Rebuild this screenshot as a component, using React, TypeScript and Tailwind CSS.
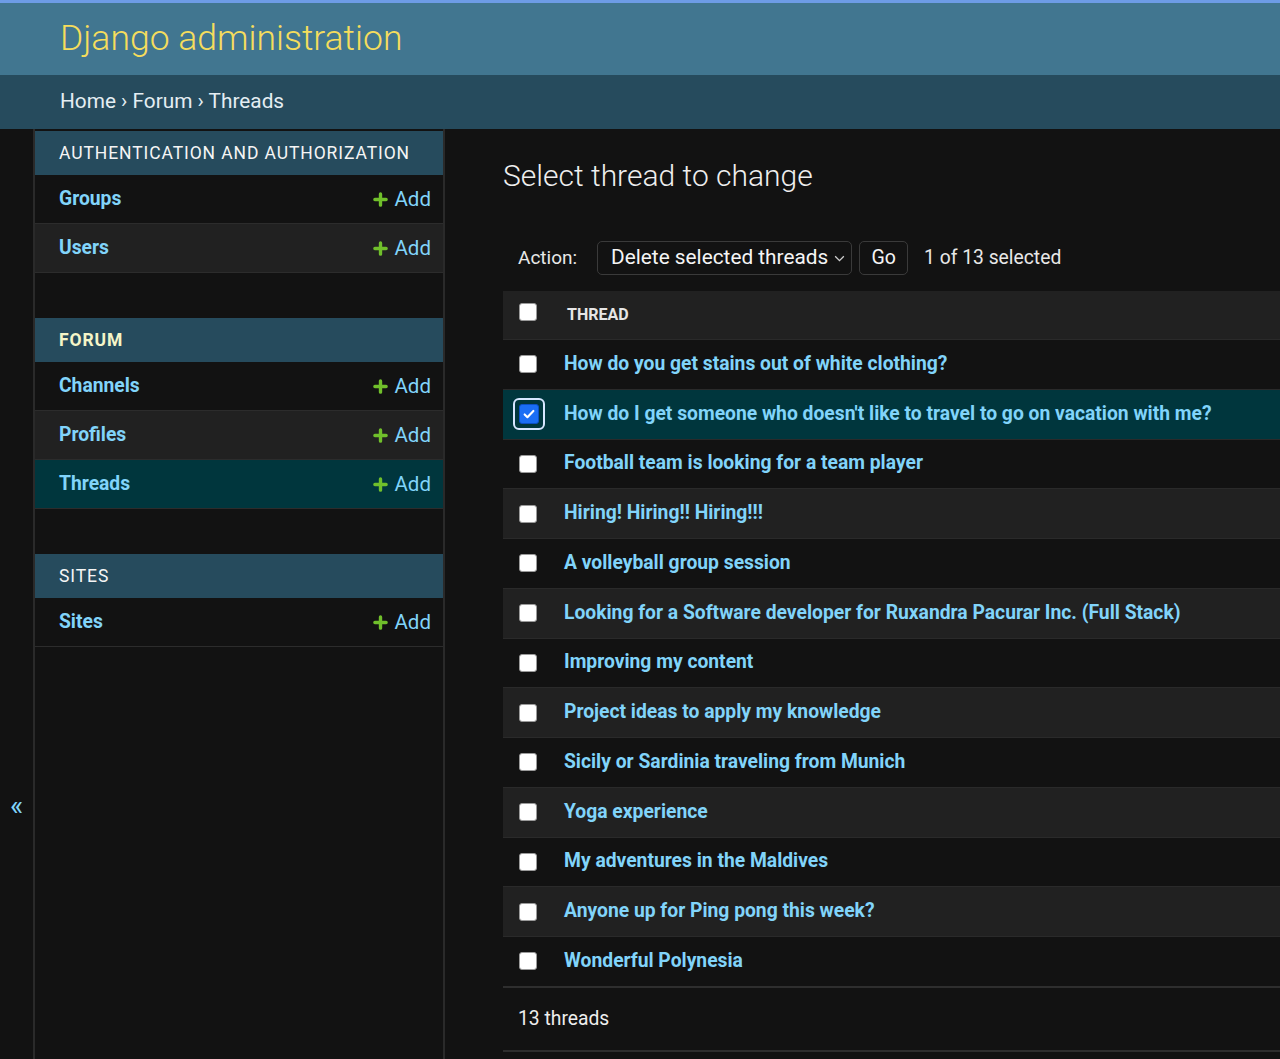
import React from "react";

type Model = { name: string; selected?: boolean };
type AppModule = { title: string; current?: boolean; models: Model[] };

const modules: AppModule[] = [
  { title: "Authentication and Authorization", models: [{ name: "Groups" }, { name: "Users" }] },
  {
    title: "Forum",
    current: true,
    models: [{ name: "Channels" }, { name: "Profiles" }, { name: "Threads", selected: true }],
  },
  { title: "Sites", models: [{ name: "Sites" }] },
];

const threads = [
  "How do you get stains out of white clothing?",
  "How do I get someone who doesn't like to travel to go on vacation with me?",
  "Football team is looking for a team player",
  "Hiring! Hiring!! Hiring!!!",
  "A volleyball group session",
  "Looking for a Software developer for Ruxandra Pacurar Inc. (Full Stack)",
  "Improving my content",
  "Project ideas to apply my knowledge",
  "Sicily or Sardinia traveling from Munich",
  "Yoga experience",
  "My adventures in the Maldives",
  "Anyone up for Ping pong this week?",
  "Wonderful Polynesia",
];

function PlusIcon() {
  return (
    <svg width="15" height="15" viewBox="0 0 16 16" className="mr-[7px]">
      <path d="M8 2v12M2 8h12" stroke="#70bf2b" strokeWidth="3.6" strokeLinecap="round" fill="none" />
    </svg>
  );
}

function Checkbox({ checked }: { checked?: boolean }) {
  if (checked) {
    return (
      <span className="relative inline-flex h-[20px] w-[20px]">
        <span className="absolute -left-[6px] -top-[6px] h-[32px] w-[32px] rounded-[6px] border-2 border-[#d6e6ff]" />
        <span className="flex h-[20px] w-[20px] items-center justify-center rounded-[3px] border border-[#0b4fc4] bg-[#1a6ef5]">
          <svg width="14" height="14" viewBox="0 0 16 16">
            <path d="M3 8.5l3.2 3.2L13 4.5" stroke="white" strokeWidth="2.4" fill="none" strokeLinecap="round" strokeLinejoin="round" />
          </svg>
        </span>
      </span>
    );
  }
  return <span className="inline-block h-[18px] w-[18px] rounded-[3px] border border-[#9a9a9a] bg-white" />;
}

function Sidebar() {
  return (
    <nav className="w-[410px] shrink-0 border-r-2 border-[#2a2a2a] pt-[2px]">
      {modules.map((m) => (
        <div key={m.title} className="mb-[45px]">
          <div
            className={
              "flex h-[44px] items-center bg-[#264b5d] px-[24px] text-[17.5px] uppercase tracking-[0.9px] " +
              (m.current ? "font-bold text-[#f5f5c8]" : "text-[#f5f5f5]")
            }
          >
            {m.title}
          </div>
          {m.models.map((model, i) => (
            <div
              key={model.name}
              className={
                "flex h-[49px] items-center justify-between border-b border-[#2c2c2c] pl-[24px] pr-[12px] " +
                (model.selected ? "bg-[#00363d]" : i % 2 === 1 ? "bg-[#212121]" : "bg-[#121212]")
              }
            >
              <span className="text-[19.3px] font-bold text-[#81d4fa]">{model.name}</span>
              <span className="flex items-center text-[20.5px] text-[#81d4fa]">
                <PlusIcon />
                Add
              </span>
            </div>
          ))}
        </div>
      ))}
    </nav>
  );
}

export default function App() {
  return (
    <div
      className="flex min-h-[1059px] flex-col overflow-hidden border-t-[3px] border-[#6d9ce6] bg-[#121212] text-[#f5f5f5]"
      style={{ fontFamily: "Roboto, 'Noto Sans', sans-serif" }}
    >
      <header className="flex h-[72px] items-center bg-[#417690] px-[60px]">
        <h1 className="text-[35.5px] font-light text-[#f5dd5d]">Django administration</h1>
      </header>
      <div className="flex h-[54px] items-center bg-[#264b5d] px-[60px] text-[20.8px] text-[#e4eef3]">
        Home › Forum › Threads
      </div>
      <div className="flex flex-1">
        <div className="flex w-[35px] shrink-0 justify-center border-r-2 border-[#2a2a2a] pt-[663px]">
          <span className="text-[28px] leading-none text-[#81d4fa]">«</span>
        </div>
        <Sidebar />
        <main className="min-w-0 flex-1 pl-[58px] pt-[29px]">
          <h2 className="h-[36px] text-[30px] font-light leading-[36px] text-[#eeeeee]">Select thread to change</h2>
          <div className="mt-[32px] flex h-[64px] items-center gap-[7px] pl-[15px] text-[19px]">
            <span className="mr-[13px] text-[#e8e8e8]">Action:</span>
            <span className="flex h-[34px] w-[255px] items-center justify-between rounded-[5px] border border-[#3a3a3a] pl-[13px] pr-[5px] text-[20.8px] text-[#f5f5f5]">
              Delete selected threads
              <svg width="13" height="13" viewBox="0 0 12 12">
                <path d="M2 4l4 4 4-4" stroke="#d0d0d0" strokeWidth="1.2" fill="none" />
              </svg>
            </span>
            <span className="flex h-[34px] w-[49px] items-center justify-center rounded-[5px] border border-[#3a3a3a] text-[19.5px]">
              Go
            </span>
            <span className="ml-[9px] text-[19.3px] text-[#e8e8e8]">1 of 13 selected</span>
          </div>
          <div className="mt-[1px] w-[800px] min-w-full">
            <div className="flex h-[48px] items-center bg-[#212121] pl-[16px]">
              <span className="w-[48px]">
                <Checkbox />
              </span>
              <span className="text-[16px] font-bold uppercase text-[#e6e6e6]">Thread</span>
            </div>
            {threads.map((t, i) => (
              <div
                key={t}
                className={
                  "flex h-[49.75px] items-center border-t border-[#2a2a2a] pl-[16px] " +
                  (i === 1 ? "bg-[#00363d]" : i % 2 === 1 ? "bg-[#212121]" : "bg-[#121212]")
                }
              >
                <span className="flex w-[45px] items-center">
                  <Checkbox checked={i === 1} />
                </span>
                <span className="whitespace-nowrap text-[19.3px] font-bold text-[#81d4fa]">{t}</span>
              </div>
            ))}
            <div className="flex h-[66px] items-center border-y-2 border-[#2e2e2e] pl-[15px] pt-[2px] text-[19.3px] text-[#eeeeee]">
              13 threads
            </div>
          </div>
        </main>
      </div>
    </div>
  );
}
